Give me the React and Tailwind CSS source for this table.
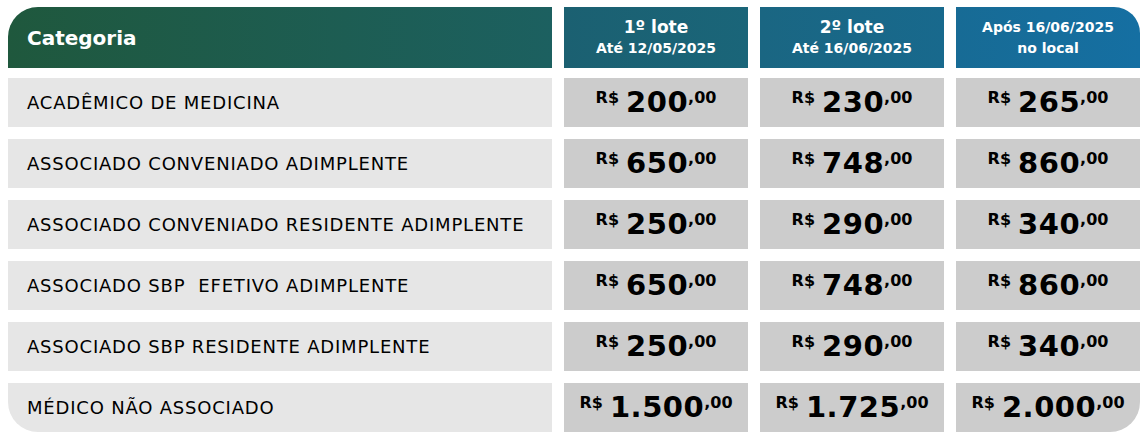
import React from "react";

const rows = [
  { label: "ACADÊMICO DE MEDICINA", prices: ["200", "230", "265"] },
  { label: "ASSOCIADO CONVENIADO ADIMPLENTE", prices: ["650", "748", "860"] },
  { label: "ASSOCIADO CONVENIADO RESIDENTE ADIMPLENTE", prices: ["250", "290", "340"] },
  { label: "ASSOCIADO SBP\u00a0 EFETIVO ADIMPLENTE", prices: ["650", "748", "860"] },
  { label: "ASSOCIADO SBP RESIDENTE ADIMPLENTE", prices: ["250", "290", "340"] },
  { label: "MÉDICO NÃO ASSOCIADO", prices: ["1.500", "1.725", "2.000"] },
];

const Price = ({ value }) => (
  <div className="flex items-start justify-center text-black">
    <span className="text-[16px] font-bold leading-none mt-[2px] mr-[7px]">R$</span>
    <span className="text-[29px] font-extrabold leading-none tracking-[0.5px]">{value}</span>
    <span className="text-[16px] font-bold leading-none mt-[2px]">,00</span>
  </div>
);

export default function App() {
  return (
    <div
      className="w-[1148px] h-[439px] bg-white pt-[7px] px-2"
      style={{ fontFamily: '"DejaVu Sans", "Liberation Sans", sans-serif' }}
    >
      <div className="grid grid-cols-[544px_184px_184px_184px] gap-x-3">
        <div className="h-[61px] rounded-tl-[30px] bg-gradient-to-r from-[#1f583d] to-[#1c6060] flex items-center pl-[19px]">
          <span className="text-white text-[20px] font-bold">Categoria</span>
        </div>
        <div className="h-[61px] bg-gradient-to-r from-[#1b6071] to-[#1a6579] flex flex-col items-center justify-center text-white font-bold leading-[21px]">
          <span className="text-[17px]">1º lote</span>
          <span className="text-[14px]">Até 12/05/2025</span>
        </div>
        <div className="h-[61px] bg-gradient-to-r from-[#1a6682] to-[#18698d] flex flex-col items-center justify-center text-white font-bold leading-[21px]">
          <span className="text-[17px]">2º lote</span>
          <span className="text-[14px]">Até 16/06/2025</span>
        </div>
        <div className="h-[61px] rounded-tr-[26px] bg-gradient-to-r from-[#176b95] to-[#156fa2] flex flex-col items-center justify-center text-white font-bold leading-[21px]">
          <span className="text-[14px]">Após 16/06/2025</span>
          <span className="text-[14px]">no local</span>
        </div>
      </div>

      <div className="mt-[10px] grid grid-cols-[544px_184px_184px_184px] gap-x-3 gap-y-3">
        {rows.map((row, i) => {
          const last = i === rows.length - 1;
          return (
            <React.Fragment key={row.label}>
              <div
                className={
                  "h-[49px] bg-[#e6e6e6] flex items-center pl-[19px] " +
                  (last ? "rounded-bl-[30px]" : "")
                }
              >
                <span className="text-[18px] tracking-[0.8px] text-black whitespace-pre">{row.label}</span>
              </div>
              {row.prices.map((p, j) => (
                <div
                  key={j}
                  className={
                    "h-[49px] bg-[#cccccc] flex items-center justify-center " +
                    (last && j === 2 ? "rounded-br-[30px]" : "")
                  }
                >
                  <Price value={p} />
                </div>
              ))}
            </React.Fragment>
          );
        })}
      </div>
    </div>
  );
}
